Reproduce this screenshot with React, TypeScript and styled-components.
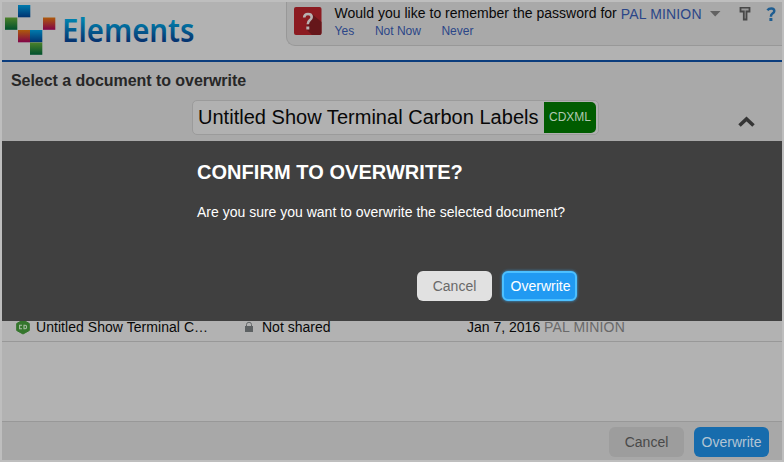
import React from "react";
import styled, { createGlobalStyle } from "styled-components";

const Global = createGlobalStyle`
  * { box-sizing: border-box; }
  body { margin: 0; background: #bebebe; font-family: "Liberation Sans", Arial, sans-serif; color: #080808; }
`;

const Window = styled.div`
  position: relative;
  width: 780px;
  height: 458px;
  margin: 2px;
  display: flex;
  flex-direction: column;
  background: #b2b2b2;
  overflow: hidden;
`;

const Header = styled.header`
  display: flex;
  justify-content: space-between;
  height: 60px;
  flex: none;
  border-bottom: 2px solid #0b3d7d;
`;

const Logo = styled.svg`
  display: block;
  width: 200px;
  height: 58px;
  overflow: visible;
`;

const PasswordBar = styled.div`
  display: flex;
  width: 496px;
  height: 44px;
  border: solid #989898;
  border-width: 0 0 1px 1px;
  border-bottom-left-radius: 9px;
  background: #a9a9a9;
  padding: 5px 0 0 7px;
`;

const PasswordIcon = styled.svg`
  width: 28px;
  height: 29px;
  flex: none;
`;

const PasswordText = styled.div`
  display: flex;
  flex-direction: column;
  width: 372px;
  flex: none;
  margin-left: 12.5px;
`;

const Fitted = styled.span<{ $size: number; $spacing?: number; $color?: string }>`
  font-size: ${(p) => p.$size}px;
  letter-spacing: ${(p) => p.$spacing ?? 0}px;
  color: ${(p) => p.$color ?? "inherit"};
  white-space: pre;
`;

const Question = styled.div`
  display: flex;
  height: 17px;
  line-height: 13px;
`;

const Choices = styled.div`
  display: flex;
  gap: 20.5px;
  line-height: 15px;
`;

const UserLink = styled.div`
  margin-left: 4px;
`;

const HeaderIcons = styled.svg`
  width: 75px;
  height: 20px;
  margin-left: 0.5px;
  flex: none;
`;

const Toolbar = styled.section`
  height: 79px;
  flex: none;
  padding: 9px 9px 0;
  background: #a9a9a9;
`;

const Heading = styled.h1`
  margin: 0;
  height: 29px;
  line-height: 19px;
  font-size: 16px;
  letter-spacing: -0.05px;
  color: #272727;
`;

const NameRow = styled.div`
  display: flex;
`;

const NameField = styled.div`
  display: flex;
  align-items: center;
  width: 407px;
  height: 35px;
  margin-left: 181px;
  padding: 1px 2px 1px 5px;
  border: 1px solid #9b9b9b;
  border-radius: 5px;
  background: #b1b1b1;
`;

const NameText = styled.div`
  width: 341px;
  overflow: hidden;
  white-space: nowrap;
  font-size: 20px;
  letter-spacing: 0.02px;
  line-height: 28px;
  padding-bottom: 2px;
`;

const FormatBadge = styled.div`
  width: 52px;
  height: 31px;
  margin-left: 5px;
  border-radius: 0 5px 5px 0;
  background: #005c00;
  color: #b2c9b2;
  font-size: 12px;
  line-height: 31px;
  text-align: center;
`;

const Chevron = styled.svg`
  width: 20px;
  height: 14px;
  margin: 14px 0 0 138px;
`;

const List = styled.main`
  flex: 1;
  display: flex;
  flex-direction: column;
  padding-top: 171px;
`;

const Row = styled.div`
  display: grid;
  grid-template-columns: 34px 208px 18px 205px 1fr;
  align-items: center;
  height: 30px;
  border-bottom: 1px solid #989898;
  font-size: 14px;
`;

const DocIcon = styled.svg`
  width: 16px;
  height: 16px;
  margin: 1px 0 0 13px;
`;

const LockIcon = styled.svg`
  width: 10px;
  height: 12px;
  margin-top: 1px;
`;

const Footer = styled.footer`
  display: flex;
  justify-content: flex-end;
  gap: 10px;
  height: 39px;
  flex: none;
  padding: 5px 13px 0 0;
  border-top: 1px solid #989898;
  background: #a8a8a8;
`;

const Button = styled.button<{ $bg: string; $fg: string; $glow?: boolean }>`
  width: 75px;
  height: 30px;
  padding: ${(p) => (p.$glow ? "0 0 0 2px" : "0")};
  border: ${(p) => (p.$glow ? "2px solid #4dc0ff" : "0")};
  border-radius: 6px;
  background: ${(p) => p.$bg};
  color: ${(p) => p.$fg};
  box-shadow: ${(p) => (p.$glow ? "0 0 3px #38a5ef" : "none")};
  font: 14px "Liberation Sans", Arial, sans-serif;
  white-space: nowrap;
  text-align: center;
`;

const Dialog = styled.div`
  position: absolute;
  left: 0;
  top: 139px;
  width: 780px;
  height: 180px;
  padding: 19px 205px 0 195px;
  background: #404040;
  color: #fff;
`;

const DialogTitle = styled.h2`
  margin: 0;
  height: 42px;
  font-size: 20px;
  letter-spacing: 0.05px;
  line-height: 24px;
  white-space: nowrap;
`;

const DialogText = styled.p`
  margin: 0;
  height: 69px;
  font-size: 14px;
  line-height: 20px;
`;

const Actions = styled.div`
  display: flex;
  justify-content: flex-end;
  gap: 10px;
`;

const tiles: [number, number, string][] = [
  [16, 3, "blue"],
  [3, 15.5, "green"],
  [41, 15.5, "red"],
  [16, 28, "red"],
  [28, 28, "blue"],
  [28, 40.5, "green"],
];

const ramps = [
  ["blue", "#007aac", "#003371"],
  ["green", "#4b812a", "#00502d"],
  ["red", "#ad5a0b", "#810348"],
  ["word", "#007fac", "#063571"],
];

export default function App() {
  return (
    <>
      <Global />
      <Window>
        <Header>
          <Logo viewBox="0 0 200 58">
            <defs>
              {ramps.map(([id, a, b]) => (
                <linearGradient id={id} key={id} x1="0" y1="0" x2="0" y2="1">
                  <stop offset={id === "word" ? "0.3" : "0"} stopColor={a} />
                  <stop offset={id === "word" ? "0.75" : "1"} stopColor={b} />
                </linearGradient>
              ))}
            </defs>
            {tiles.map(([x, y, ramp]) => (
              <rect key={`${x}-${y}`} x={x} y={y} width="12.3" height="12.3" fill={`url(#${ramp})`} />
            ))}
            <text x="60" y="40" textLength="132.5" lengthAdjust="spacingAndGlyphs" fill="url(#word)" fontFamily="Noto Sans, sans-serif" fontWeight="600" fontSize="33">Elements</text>
          </Logo>
          <PasswordBar>
            <PasswordIcon viewBox="0 0 28 29">
              <rect x="0" y="0" width="27.5" height="28" rx="2" fill="#8c1b21" />
              <path d="M18 7L27.5 15V26Q27.5 28 25.5 28H18L12 22Z" fill="#65161a" />
              <path d="M10.2 10.5Q10.2 7 14 7Q17.7 7 17.7 10Q17.7 12 15.6 13.3Q13.8 14.5 13.8 17.3" fill="none" stroke="#b8b2b2" strokeWidth="2.6" />
              <rect x="12.3" y="19.5" width="3" height="3" fill="#b8b2b2" />
            </PasswordIcon>
            <PasswordText>
              <Question>
                <Fitted $size={14} $spacing={0.02}>Would you like to remember the password for</Fitted>
                <UserLink><Fitted $size={14} $color="#2b4688" $spacing={0.15}>PAL MINION</Fitted></UserLink>
              </Question>
              <Choices>
                <Fitted $size={12} $color="#2b4688" $spacing={0.1}>Yes</Fitted>
                <Fitted $size={12} $color="#2b4688">Not Now</Fitted>
                <Fitted $size={12} $color="#2b4688">Never</Fitted>
              </Choices>
            </PasswordText>
            <HeaderIcons viewBox="0 0 75 20">
              <path d="M3 4H13.5L8.2 9.5Z" fill="#626262" />
              <path d="M33.5 0.5H42.5V4.5H39.5V12.5H36.8V4.5H33.5Z" fill="#999" stroke="#484848" strokeWidth="1.8" />
              <path d="M60.4 3.2Q61.8 1.4 64.3 1.4Q67.3 1.4 67.3 4Q67.3 5.4 65.5 6.5Q63.9 7.5 63.9 9.8" fill="none" stroke="#1e5d91" strokeWidth="2.5" />
              <rect x="62.4" y="11" width="3" height="3" fill="#1e5d91" />
            </HeaderIcons>
          </PasswordBar>
        </Header>
        <Toolbar>
          <Heading>Select a document to overwrite</Heading>
          <NameRow>
            <NameField>
              <NameText>Untitled Show Terminal Carbon Labels</NameText>
              <FormatBadge>CDXML</FormatBadge>
            </NameField>
            <Chevron viewBox="0 0 20 14">
              <path d="M2.5 11.5L9.5 5L16.5 11.5" fill="none" stroke="#353535" strokeWidth="3.6" />
            </Chevron>
          </NameRow>
        </Toolbar>
        <List>
          <Row>
            <DocIcon viewBox="0 0 16 16">
              <path d="M8 1L14.3 4.5V11.5L8 15L1.7 11.5V4.5Z" fill="#34762c" stroke="#34762c" />
              <path d="M7 6.2H4.6V9.8H7M9 6.2H10.2Q11.6 6.2 11.6 8Q11.6 9.8 10.2 9.8H9Z" fill="none" stroke="#a8bea5" strokeWidth="1.1" />
            </DocIcon>
            <Fitted $size={14} $spacing={0.05}>Untitled Show Terminal C…</Fitted>
            <LockIcon viewBox="0 0 10 12">
              <path d="M2.5 6V3.5Q2.5 1.3 5 1.3Q7.5 1.3 7.5 3.5V6" fill="none" stroke="#626668" />
              <rect x="1" y="5" width="8" height="6" fill="#5d6163" />
            </LockIcon>
            <Fitted $size={14}>Not shared</Fitted>
            <div><Fitted $size={14}>Jan 7, 2016 </Fitted><Fitted $size={14} $color="#696969" $spacing={0.15}>PAL MINION</Fitted></div>
          </Row>
        </List>
        <Footer>
          <Button $bg="#9d9d9d" $fg="#494949">Cancel</Button>
          <Button $bg="#176cad" $fg="#b2c5d4">Overwrite</Button>
        </Footer>
        <Dialog role="dialog">
          <DialogTitle>CONFIRM TO OVERWRITE?</DialogTitle>
          <DialogText>Are you sure you want to overwrite the selected document?</DialogText>
          <Actions>
            <Button $bg="#e1e1e1" $fg="#696969">Cancel</Button>
            <Button $bg="#219af2" $fg="#fff" $glow>Overwrite</Button>
          </Actions>
        </Dialog>
      </Window>
    </>
  );
}
